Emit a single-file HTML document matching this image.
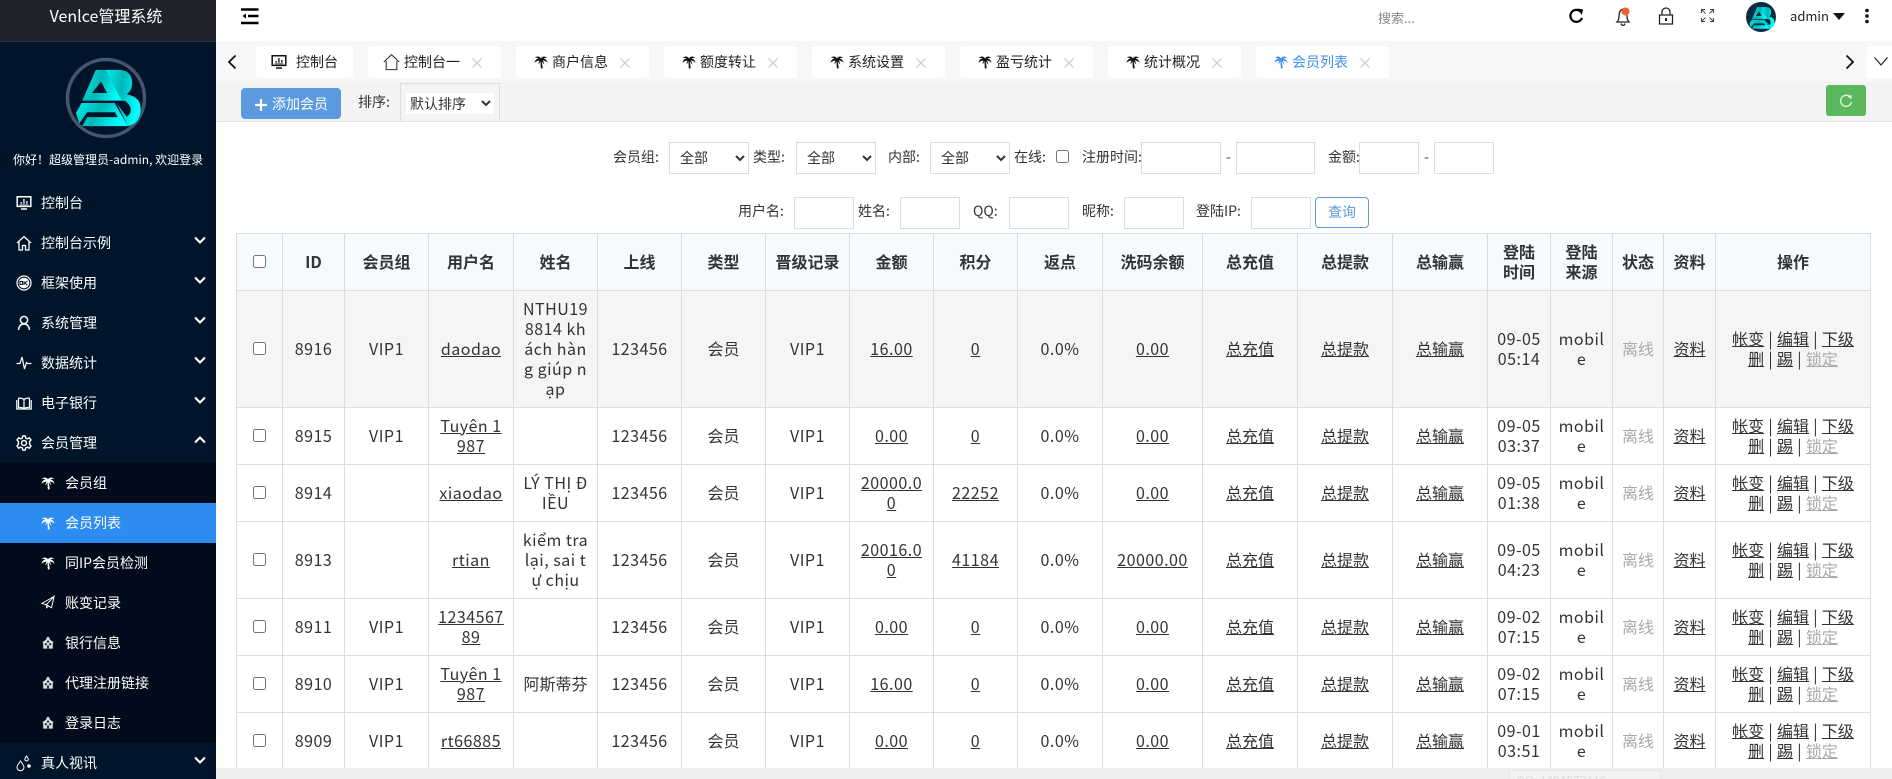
<!DOCTYPE html>
<html lang="zh-CN"><head><meta charset="utf-8"><title>Venlce管理系统</title>
<style>
*{box-sizing:border-box}
html,body{margin:0;padding:0;width:1892px;height:779px;overflow:hidden;background:#fff;font-family:"Noto Sans CJK SC","Liberation Sans",sans-serif;color:#333}
.a{position:absolute}
.t{position:absolute;white-space:nowrap;line-height:20px;font-size:14px}
#side{left:0;top:0;width:216px;height:779px;background:#001529;overflow:hidden;color:#fff}
#brand{left:0;top:0;width:216px;height:42px;background:#20232a;border-bottom:1px solid #1f3350}
.m{position:absolute;left:0;width:216px;height:40px;color:#fff;font-size:14px;line-height:40px}
.m span{position:absolute;left:41px;top:0;white-space:nowrap}
.m.s span{left:65px}
.m svg{position:absolute;color:#fff}
.m .ic{left:16px;top:11px;width:16px;height:18px}
.m.s .ic{left:41px;top:12px;width:14px;height:15px}
.m .ch{left:193px;top:12px;width:14px;height:10px}
.tab{position:absolute;top:46px;height:32px;background:#fff;border-radius:3px}
.tab span{position:absolute;top:6px;left:36px;line-height:20px;font-size:14px;color:#222;white-space:nowrap}
.tab .p{position:absolute;left:18px;top:8px;width:14px;height:15px;color:#111}
.tab .x{position:absolute;left:104px;top:12px;width:10px;height:10px}
select{font-family:inherit;font-size:14px;color:#333;background:#fff}
.fs{position:absolute;height:32px;width:80px;border:1px solid #ddd;padding-left:6px}
.fi{position:absolute;height:32px;border:1px solid #ddd;background:#fff}
#wrap{position:absolute;left:216px;top:122px;width:1676px;height:646px;overflow:hidden;background:transparent}
table{position:absolute;left:20px;top:111px;border-collapse:collapse;table-layout:fixed;width:1634px;font-size:16px;line-height:20px;color:#333}
th,td{border:1px solid #ddd;text-align:center;vertical-align:middle;padding:0 0 2px;white-space:nowrap;overflow:hidden}
th{background:#f5faff;font-weight:700;color:#333}
td a{color:#333;text-decoration:underline}
td:nth-child(2),td:nth-child(3),td:nth-child(4),td:nth-child(5),td:nth-child(6),td:nth-child(8),td:nth-child(9),td:nth-child(10),td:nth-child(11),td:nth-child(12),td:nth-child(16),td:nth-child(17){letter-spacing:.5px}
td:nth-child(20){word-spacing:.7px}
.g,.g a{color:#aaa}
input[type=checkbox]{margin:0;vertical-align:middle}
th input[type=checkbox],td input[type=checkbox]{position:relative;top:-2px}
.h1 td{background:#f5f5f5}
</style></head><body>

<svg width="0" height="0" style="position:absolute">
<defs>
<symbol id="palm" viewBox="0 0 16 16"><path fill="currentColor" d="M8 4.500C6.400 1.800 3.500 1.500.8 3.800 2.800 3.500 4.200 4 5 5 3.200 4.800 1.400 6 .5 9.500 2.200 7.800 4.200 7 6.200 6.800L4.800 11.500C6 10.300 7 9 7.400 7.600L7.800 15.800H10L8.800 7.400C9.500 8.800 10.500 10.200 12 11.600L10.200 6.700C12 6.900 13.800 7.800 15.500 9.500 14.600 6 12.800 4.800 11 5 11.800 4 13.200 3.500 15.200 3.800 12.500 1.500 9.600 1.800 8 4.500Z"/></symbol>
<symbol id="bank" viewBox="0 0 16 16"><path fill="currentColor" d="M8 1 10 3.200V4.500L15 8H13.500V15H2.500V8H1L6 4.500V3.200Z"/><path fill="#001529" d="M7 6h2v2H7zM4.500 9h2v2h-2zM9.500 9h2v2h-2zM7 11.500h2v3.500H7z"/></symbol>
<symbol id="chev" viewBox="0 0 14 10"><path d="M2 2.500 7 7.500 12 2.500" fill="none" stroke="currentColor" stroke-width="2"/></symbol>
<symbol id="xx" viewBox="0 0 10 10"><path d="M.5.500 9.500 9.500M9.500.500.500 9.500" stroke="#c8c8c8" stroke-width="1.200" fill="none"/></symbol>
<symbol id="mon" viewBox="0 0 16 16"><path d="M1.200 1.800H14.800V11.400H1.200ZM5 14H11" fill="none" stroke="currentColor" stroke-width="1.500"/><path d="M4.500 8.700h1.300V7H4.500zM7.300 8.700h1.300V4H7.300zM10.200 8.700h1.300V6H10.200zM3.500 9.500h9v.700h-9z" fill="currentColor"/></symbol>
<symbol id="hom" viewBox="0 0 16 16"><path d="M1 8 8 1.500 15 8M3 7V15H6.500V10.500H9.500V15H13V7" fill="none" stroke="currentColor" stroke-width="1.300"/></symbol>
<linearGradient id="lg" x1="0" y1="0" x2="1" y2=".3"><stop offset="0" stop-color="#00efec"/><stop offset=".5" stop-color="#00b6b6"/><stop offset="1" stop-color="#00ffff"/></linearGradient>
<symbol id="logo" viewBox="200 170 236 236">
<path fill="url(#lg)" fill-rule="evenodd" d="M288 210H318L375 303H247ZM304 245 277 280H322Z"/>
<path fill="url(#lg)" d="M318 210H360Q398 212 398 250 398 272 382 284 425 292 424 330 422 372 385 380L352 312 382 352Q398 340 392 322 385 305 365 300Z"/>
<path fill="url(#lg)" d="M245 310H345L385 380H247L262 353H354L346 338H262L238 372 228 340Z"/>
</symbol>
</defs>
</svg>

<!-- SIDEBAR -->
<div id="side" class="a">
<div id="brand" class="a"></div>
<div class="t" style="left:0;width:212px;text-align:center;top:5px;font-size:16px;color:#fff">Venlce管理系统</div>
<svg class="a" style="left:64px;top:56px" width="84" height="84" viewBox="0 0 84 84"><circle cx="42" cy="42" r="38.500" fill="none" stroke="#46566c" stroke-width="3.500"/><use href="#logo" x="2.700" y=".7" width="78" height="78"/></svg>
<div class="t" style="left:13px;top:150px;font-size:12px;color:#fff">你好！超级管理员-admin, 欢迎登录</div>

<div class="m" style="top:183px"><svg class="ic" viewBox="0 0 16 16"><use href="#mon"/></svg><span>控制台</span></div>
<div class="m" style="top:223px"><svg class="ic" viewBox="0 0 16 16"><use href="#hom"/></svg><span>控制台示例</span><svg class="ch"><use href="#chev"/></svg></div>
<div class="m" style="top:263px"><svg class="ic" viewBox="0 0 16 16"><circle cx="8" cy="8" r="7" fill="none" stroke="currentColor" stroke-width="1.200"/><circle cx="8" cy="8" r="5.300" fill="currentColor"/><path d="M4 6.500h2.500v3H4zM8 6v4M11.500 6 8.800 8 11.500 10" fill="none" stroke="#001529" stroke-width="1"/></svg><span>框架使用</span><svg class="ch"><use href="#chev"/></svg></div>
<div class="m" style="top:303px"><svg class="ic" viewBox="0 0 16 16"><circle cx="8" cy="5" r="3.600" fill="none" stroke="currentColor" stroke-width="1.500"/><path d="M2.500 15C3 11 5 9 8 9s5 2 5.500 6" fill="none" stroke="currentColor" stroke-width="1.500"/></svg><span>系统管理</span><svg class="ch"><use href="#chev"/></svg></div>
<div class="m" style="top:343px"><svg class="ic" viewBox="0 0 16 16"><path d="M.5 8.500H4L6 2 8.500 14 10.500 7.500 11.500 8.500H15.500" fill="none" stroke="currentColor" stroke-width="1.200"/></svg><span>数据统计</span><svg class="ch"><use href="#chev"/></svg></div>
<div class="m" style="top:383px"><svg class="ic" viewBox="0 0 16 16"><path d="M8 4.500C6.500 3.200 4.500 3 2.500 3.200V12.500C4.500 12.300 6.500 12.500 8 13.500 9.500 12.500 11.500 12.300 13.500 12.500V3.200C11.500 3 9.500 3.200 8 4.500ZM8 4.500V13.500M.8 5V14H15.200V5" fill="none" stroke="currentColor" stroke-width="1.200"/></svg><span>电子银行</span><svg class="ch"><use href="#chev"/></svg></div>
<div class="m" style="top:423px"><svg class="ic" viewBox="0 0 16 16"><circle cx="8" cy="8" r="2.500" fill="none" stroke="currentColor" stroke-width="1.400"/><path d="M6.800 1H9.200L9.700 3 11.500 3.800 13.300 2.800 15 5 13.600 6.500V9.500L15 11 13.300 13.200 11.500 12.200 9.700 13 9.200 15H6.800L6.300 13 4.500 12.200 2.700 13.200 1 11 2.400 9.500V6.500L1 5 2.700 2.800 4.500 3.800 6.300 3Z" fill="none" stroke="currentColor" stroke-width="1.400"/></svg><span>会员管理</span><svg class="ch"><path d="M2 7.500 7 2.500 12 7.500" fill="none" stroke="#fff" stroke-width="2"/></svg></div>

<div class="a" style="left:0;top:463px;width:216px;height:280px;background:#000c1c"></div>
<div class="m s" style="top:463px"><svg class="ic"><use href="#palm"/></svg><span>会员组</span></div>
<div class="m s" style="top:503px;background:#2d8cf0"><svg class="ic"><use href="#palm"/></svg><span>会员列表</span></div>
<div class="m s" style="top:543px"><svg class="ic"><use href="#palm"/></svg><span>同IP会员检测</span></div>
<div class="m s" style="top:583px"><svg class="ic" viewBox="0 0 16 16"><path d="M15 1 1 9 6 10.500 15 1 12 14 6 10.500 6.500 14 8.500 12" fill="none" stroke="currentColor" stroke-width="1.100"/></svg><span>账变记录</span></div>
<div class="m s" style="top:623px"><svg class="ic" style="color:#d5dbe0"><use href="#bank"/></svg><span>银行信息</span></div>
<div class="m s" style="top:663px"><svg class="ic" style="color:#d5dbe0"><use href="#bank"/></svg><span>代理注册链接</span></div>
<div class="m s" style="top:703px"><svg class="ic" style="color:#d5dbe0"><use href="#bank"/></svg><span>登录日志</span></div>
<div class="m" style="top:743px"><svg class="ic" viewBox="0 0 16 16"><path d="M4.500 6C2.500 9 1 10.500 1 12.300A3.500 3.500 0 0 0 8 12.300C8 10.500 6.500 9 4.500 6ZM10.500 1C9.500 2.500 8.800 3.500 8.800 4.500A1.800 1.800 0 0 0 12.300 4.500C12.300 3.500 11.500 2.500 10.500 1Z" fill="none" stroke="currentColor" stroke-width="1"/><circle cx="13" cy="11" r="1.800" fill="currentColor"/></svg><span>真人视讯</span><svg class="ch"><use href="#chev"/></svg></div>
</div>

<!-- TOP BAR -->
<svg class="a" style="left:241px;top:8px" width="18" height="17" viewBox="0 0 18 17"><path d="M0 1.500H17.500M7 8H17.500M0 15H17.500" stroke="#000" stroke-width="2.400"/><path d="M1.500 8 5 5.500V10.500Z" fill="#000"/></svg>
<div class="t" style="left:1378px;top:8px;color:#888;font-size:13px">搜索...</div>
<svg class="a" style="left:1568px;top:8px" width="16" height="17" viewBox="0 0 16 17"><path d="M13 4A6 6 0 1 0 14 10" fill="none" stroke="#000" stroke-width="2.200"/><path d="M9.500 .5 15 1.500 13.800 7Z" fill="#000"/></svg>
<svg class="a" style="left:1615px;top:7px" width="16" height="20" viewBox="0 0 16 20"><path d="M8 2C4.500 3 4 6 4 9 4 12 3.500 13.500 2 15H14C12.500 13.500 12 12 12 9 12 6 11.500 3 8 2ZM6 16.500C6.500 19 9.500 19 10 16.500" fill="none" stroke="#222" stroke-width="1.300"/><circle cx="10.500" cy="4.500" r="4" fill="#f4602e"/></svg>
<svg class="a" style="left:1658px;top:7px" width="16" height="18" viewBox="0 0 16 18"><path d="M4 8V5A4 4 0 0 1 12 5V8M1.500 8H14.500V17H1.500Z" fill="none" stroke="#222" stroke-width="1.300"/><rect x="7" y="11" width="2" height="3" fill="#222"/></svg>
<svg class="a" style="left:1701px;top:9px" width="13" height="13" viewBox="0 0 13 13"><path d="M.5 4V.5H4M9 .5H12.500V4M12.500 9V12.500H9M4 12.500H.5V9M1 1 4.500 4.500M12 1 8.500 4.500M12 12 8.500 8.500M1 12 4.500 8.500" fill="none" stroke="#444" stroke-width="1"/></svg>
<svg class="a" style="left:1746px;top:2px" width="30" height="30" viewBox="0 0 30 30"><circle cx="15" cy="15" r="15" fill="#0b2b40"/><use href="#logo" x="0" y="0" width="30" height="30"/></svg>
<div class="t" style="left:1790px;top:6px;color:#222;font-size:13px">admin</div>
<svg class="a" style="left:1833px;top:13px" width="12" height="8" viewBox="0 0 12 8"><path d="M0 0H12L6 7Z" fill="#111"/></svg>
<svg class="a" style="left:1864px;top:8px" width="6" height="16" viewBox="0 0 6 16"><circle cx="3" cy="2.500" r="1.800" fill="#111"/><circle cx="3" cy="8" r="1.800" fill="#111"/><circle cx="3" cy="13.500" r="1.800" fill="#111"/></svg>

<!-- TABS -->
<div class="a" style="left:216px;top:41px;width:1676px;height:41px;background:#f5f7f9"></div>
<svg class="a" style="left:227px;top:54px" width="10" height="16" viewBox="0 0 10 16"><path d="M8.500 1.500 2 8 8.500 14.500" fill="none" stroke="#111" stroke-width="1.800"/></svg>
<div class="tab" style="left:256px;width:97px"><svg class="p" style="left:15px;top:8px;width:16px;height:16px"><use href="#mon"/></svg><span style="left:40px">控制台</span></div>
<div class="tab" style="left:368px;width:133px"><svg class="p" style="left:15px;top:7px;width:17px;height:18px;color:#333" viewBox="0 0 16 16"><path d="M.8 8 8 1 15.200 8M3 7V15.200H13V7" fill="none" stroke="currentColor" stroke-width="1"/></svg><span>控制台一</span><svg class="x"><use href="#xx"/></svg></div>
<div class="tab" style="left:516px;width:133px"><svg class="p"><use href="#palm"/></svg><span>商户信息</span><svg class="x"><use href="#xx"/></svg></div>
<div class="tab" style="left:664px;width:133px"><svg class="p"><use href="#palm"/></svg><span>额度转让</span><svg class="x"><use href="#xx"/></svg></div>
<div class="tab" style="left:812px;width:133px"><svg class="p"><use href="#palm"/></svg><span>系统设置</span><svg class="x"><use href="#xx"/></svg></div>
<div class="tab" style="left:960px;width:133px"><svg class="p"><use href="#palm"/></svg><span>盈亏统计</span><svg class="x"><use href="#xx"/></svg></div>
<div class="tab" style="left:1108px;width:133px"><svg class="p"><use href="#palm"/></svg><span>统计概况</span><svg class="x"><use href="#xx"/></svg></div>
<div class="tab" style="left:1256px;width:133px"><svg class="p" style="color:#3d8ff0"><use href="#palm"/></svg><span style="color:#3d8ff0">会员列表</span><svg class="x"><use href="#xx"/></svg></div>
<svg class="a" style="left:1845px;top:54px" width="10" height="16" viewBox="0 0 10 16"><path d="M1.500 1.500 8 8 1.500 14.500" fill="none" stroke="#111" stroke-width="1.800"/></svg>
<div class="a" style="left:1866px;top:46px;width:26px;height:32px;background:#fff;border-radius:3px 0 0 3px"></div>
<svg class="a" style="left:1874px;top:57px" width="14" height="9" viewBox="0 0 14 9"><path d="M.5.500 7 8 13.500.5" fill="none" stroke="#222" stroke-width="1.200"/></svg>

<!-- TOOLBAR -->
<div class="a" style="left:216px;top:82px;width:1676px;height:40px;background:#f4f4f4;border-bottom:1px solid #e3e3e3"></div>
<div class="a" style="left:241px;top:88px;width:100px;height:31px;background:#5b9ade;border-radius:4px"></div>
<svg class="a" style="left:255px;top:99px" width="12" height="12" viewBox="0 0 12 12"><path d="M6 0V12M0 6H12" stroke="#fff" stroke-width="2.200"/></svg>
<div class="t" style="left:272px;top:94px;color:#fff;font-size:14px">添加会员</div>
<div class="t" style="left:358px;top:92px;font-size:14px;color:#333">排序:</div>
<div class="a" style="left:400px;top:83px;width:100px;height:39px;border:1px solid #ddd;border-bottom:0"></div>
<select class="a" style="left:406px;top:93px;width:88px;height:21px;border:0;padding:0"><option>默认排序</option></select>
<div class="a" style="left:1826px;top:85px;width:40px;height:31px;background:#5cb85c;border-radius:3px"></div>
<svg class="a" style="left:1839px;top:94px" width="14" height="14" viewBox="0 0 14 14"><path d="M11.500 3.500A5.500 5.500 0 1 0 12.500 8" fill="none" stroke="#e8f5e8" stroke-width="1.300"/><path d="M8.500 2.500 12.500 1 12.500 5Z" fill="#e8f5e8"/></svg>

<!-- TABLE -->
<div id="wrap">
<table>
<colgroup><col style="width:46px"><col style="width:62px"><col style="width:84px"><col style="width:85px"><col style="width:84px"><col style="width:84px"><col style="width:84px"><col style="width:84px"><col style="width:84px"><col style="width:84px"><col style="width:85px"><col style="width:100px"><col style="width:95px"><col style="width:95px"><col style="width:95px"><col style="width:63px"><col style="width:62px"><col style="width:51px"><col style="width:52px"><col style="width:155px"></colgroup>
<tr style="height:57px"><th><input type="checkbox"></th><th>ID</th><th>会员组</th><th>用户名</th><th>姓名</th><th>上线</th><th>类型</th><th>晋级记录</th><th>金额</th><th>积分</th><th>返点</th><th>洗码余额</th><th>总充值</th><th>总提款</th><th>总输赢</th><th>登陆<br>时间</th><th>登陆<br>来源</th><th>状态</th><th>资料</th><th>操作</th></tr>

<tr class="h1" style="height:117px"><td><input type="checkbox"></td><td>8916</td><td>VIP1</td><td><a>daodao</a></td><td>NTHU19<br>8814 kh<br>ách hàn<br>g giúp n<br>ạp</td><td>123456</td><td>会员</td><td>VIP1</td><td><a>16.00</a></td><td><a>0</a></td><td>0.0%</td><td><a>0.00</a></td><td><a>总充值</a></td><td><a>总提款</a></td><td><a>总输赢</a></td><td>09-05<br>05:14</td><td>mobil<br>e</td><td class="g">离线</td><td><a>资料</a></td><td><a>帐变</a> | <a>编辑</a> | <a>下级</a><br><a>删</a> | <a>踢</a> | <span class="g"><a>锁定</a></span></td></tr>

<tr style="height:57px"><td><input type="checkbox"></td><td>8915</td><td>VIP1</td><td><a>Tuyên 1<br>987</a></td><td></td><td>123456</td><td>会员</td><td>VIP1</td><td><a>0.00</a></td><td><a>0</a></td><td>0.0%</td><td><a>0.00</a></td><td><a>总充值</a></td><td><a>总提款</a></td><td><a>总输赢</a></td><td>09-05<br>03:37</td><td>mobil<br>e</td><td class="g">离线</td><td><a>资料</a></td><td><a>帐变</a> | <a>编辑</a> | <a>下级</a><br><a>删</a> | <a>踢</a> | <span class="g"><a>锁定</a></span></td></tr>

<tr style="height:57px"><td><input type="checkbox"></td><td>8914</td><td></td><td><a>xiaodao</a></td><td>LÝ THỊ Đ<br>IỀU</td><td>123456</td><td>会员</td><td>VIP1</td><td><a>20000.0<br>0</a></td><td><a>22252</a></td><td>0.0%</td><td><a>0.00</a></td><td><a>总充值</a></td><td><a>总提款</a></td><td><a>总输赢</a></td><td>09-05<br>01:38</td><td>mobil<br>e</td><td class="g">离线</td><td><a>资料</a></td><td><a>帐变</a> | <a>编辑</a> | <a>下级</a><br><a>删</a> | <a>踢</a> | <span class="g"><a>锁定</a></span></td></tr>

<tr style="height:77px"><td><input type="checkbox"></td><td>8913</td><td></td><td><a>rtian</a></td><td>kiểm tra<br>lại, sai t<br>ự chịu</td><td>123456</td><td>会员</td><td>VIP1</td><td><a>20016.0<br>0</a></td><td><a>41184</a></td><td>0.0%</td><td><a>20000.00</a></td><td><a>总充值</a></td><td><a>总提款</a></td><td><a>总输赢</a></td><td>09-05<br>04:23</td><td>mobil<br>e</td><td class="g">离线</td><td><a>资料</a></td><td><a>帐变</a> | <a>编辑</a> | <a>下级</a><br><a>删</a> | <a>踢</a> | <span class="g"><a>锁定</a></span></td></tr>

<tr style="height:57px"><td><input type="checkbox"></td><td>8911</td><td>VIP1</td><td><a>1234567<br>89</a></td><td></td><td>123456</td><td>会员</td><td>VIP1</td><td><a>0.00</a></td><td><a>0</a></td><td>0.0%</td><td><a>0.00</a></td><td><a>总充值</a></td><td><a>总提款</a></td><td><a>总输赢</a></td><td>09-02<br>07:15</td><td>mobil<br>e</td><td class="g">离线</td><td><a>资料</a></td><td><a>帐变</a> | <a>编辑</a> | <a>下级</a><br><a>删</a> | <a>踢</a> | <span class="g"><a>锁定</a></span></td></tr>

<tr style="height:57px"><td><input type="checkbox"></td><td>8910</td><td>VIP1</td><td><a>Tuyên 1<br>987</a></td><td style="letter-spacing:0">阿斯蒂芬</td><td>123456</td><td>会员</td><td>VIP1</td><td><a>16.00</a></td><td><a>0</a></td><td>0.0%</td><td><a>0.00</a></td><td><a>总充值</a></td><td><a>总提款</a></td><td><a>总输赢</a></td><td>09-02<br>07:15</td><td>mobil<br>e</td><td class="g">离线</td><td><a>资料</a></td><td><a>帐变</a> | <a>编辑</a> | <a>下级</a><br><a>删</a> | <a>踢</a> | <span class="g"><a>锁定</a></span></td></tr>

<tr style="height:57px"><td><input type="checkbox"></td><td>8909</td><td>VIP1</td><td><a>rt66885</a></td><td></td><td>123456</td><td>会员</td><td>VIP1</td><td><a>0.00</a></td><td><a>0</a></td><td>0.0%</td><td><a>0.00</a></td><td><a>总充值</a></td><td><a>总提款</a></td><td><a>总输赢</a></td><td>09-01<br>03:51</td><td>mobil<br>e</td><td class="g">离线</td><td><a>资料</a></td><td><a>帐变</a> | <a>编辑</a> | <a>下级</a><br><a>删</a> | <a>踢</a> | <span class="g"><a>锁定</a></span></td></tr>
</table>
</div>

<!-- FILTERS -->
<div class="t" style="left:613px;top:147px">会员组:</div>
<select class="fs" style="left:669px;top:142px"><option>全部</option></select>
<div class="t" style="left:753px;top:147px">类型:</div>
<select class="fs" style="left:796px;top:142px"><option>全部</option></select>
<div class="t" style="left:888px;top:147px">内部:</div>
<select class="fs" style="left:930px;top:142px"><option>全部</option></select>
<div class="t" style="left:1014px;top:147px">在线:</div>
<input type="checkbox" class="a" style="left:1056px;top:150px">
<div class="t" style="left:1082px;top:147px">注册时间:</div>
<div class="fi" style="left:1141px;top:142px;width:80px"></div>
<div class="t" style="left:1226px;top:147px">-</div>
<div class="fi" style="left:1236px;top:142px;width:79px"></div>
<div class="t" style="left:1328px;top:147px">金额:</div>
<div class="fi" style="left:1359px;top:142px;width:60px"></div>
<div class="t" style="left:1424px;top:147px">-</div>
<div class="fi" style="left:1434px;top:142px;width:60px"></div>

<div class="t" style="left:738px;top:201px">用户名:</div>
<div class="fi" style="left:794px;top:197px;width:60px"></div>
<div class="t" style="left:858px;top:201px">姓名:</div>
<div class="fi" style="left:900px;top:197px;width:60px"></div>
<div class="t" style="left:973px;top:201px">QQ:</div>
<div class="fi" style="left:1009px;top:197px;width:60px"></div>
<div class="t" style="left:1082px;top:201px">昵称:</div>
<div class="fi" style="left:1124px;top:197px;width:60px"></div>
<div class="t" style="left:1196px;top:201px">登陆IP:</div>
<div class="fi" style="left:1251px;top:197px;width:60px"></div>
<div class="a" style="left:1315px;top:197px;width:54px;height:31px;border:1px solid #5b9ade;border-radius:4px;color:#5b9ade;font-size:14px;line-height:29px;text-align:center">查询</div>

<!-- BOTTOM -->
<div class="a" style="left:216px;top:768px;width:1676px;height:11px;background:#eee;overflow:hidden">
<div class="a" style="left:1293px;top:2px;width:152px;height:20px;border:1px solid #e4e4e4;background:#f2f2f2;color:#ddd;font-size:12px;line-height:20px;padding-left:6px;white-space:nowrap">QQ: 1494873116</div>
</div>
</body></html>
